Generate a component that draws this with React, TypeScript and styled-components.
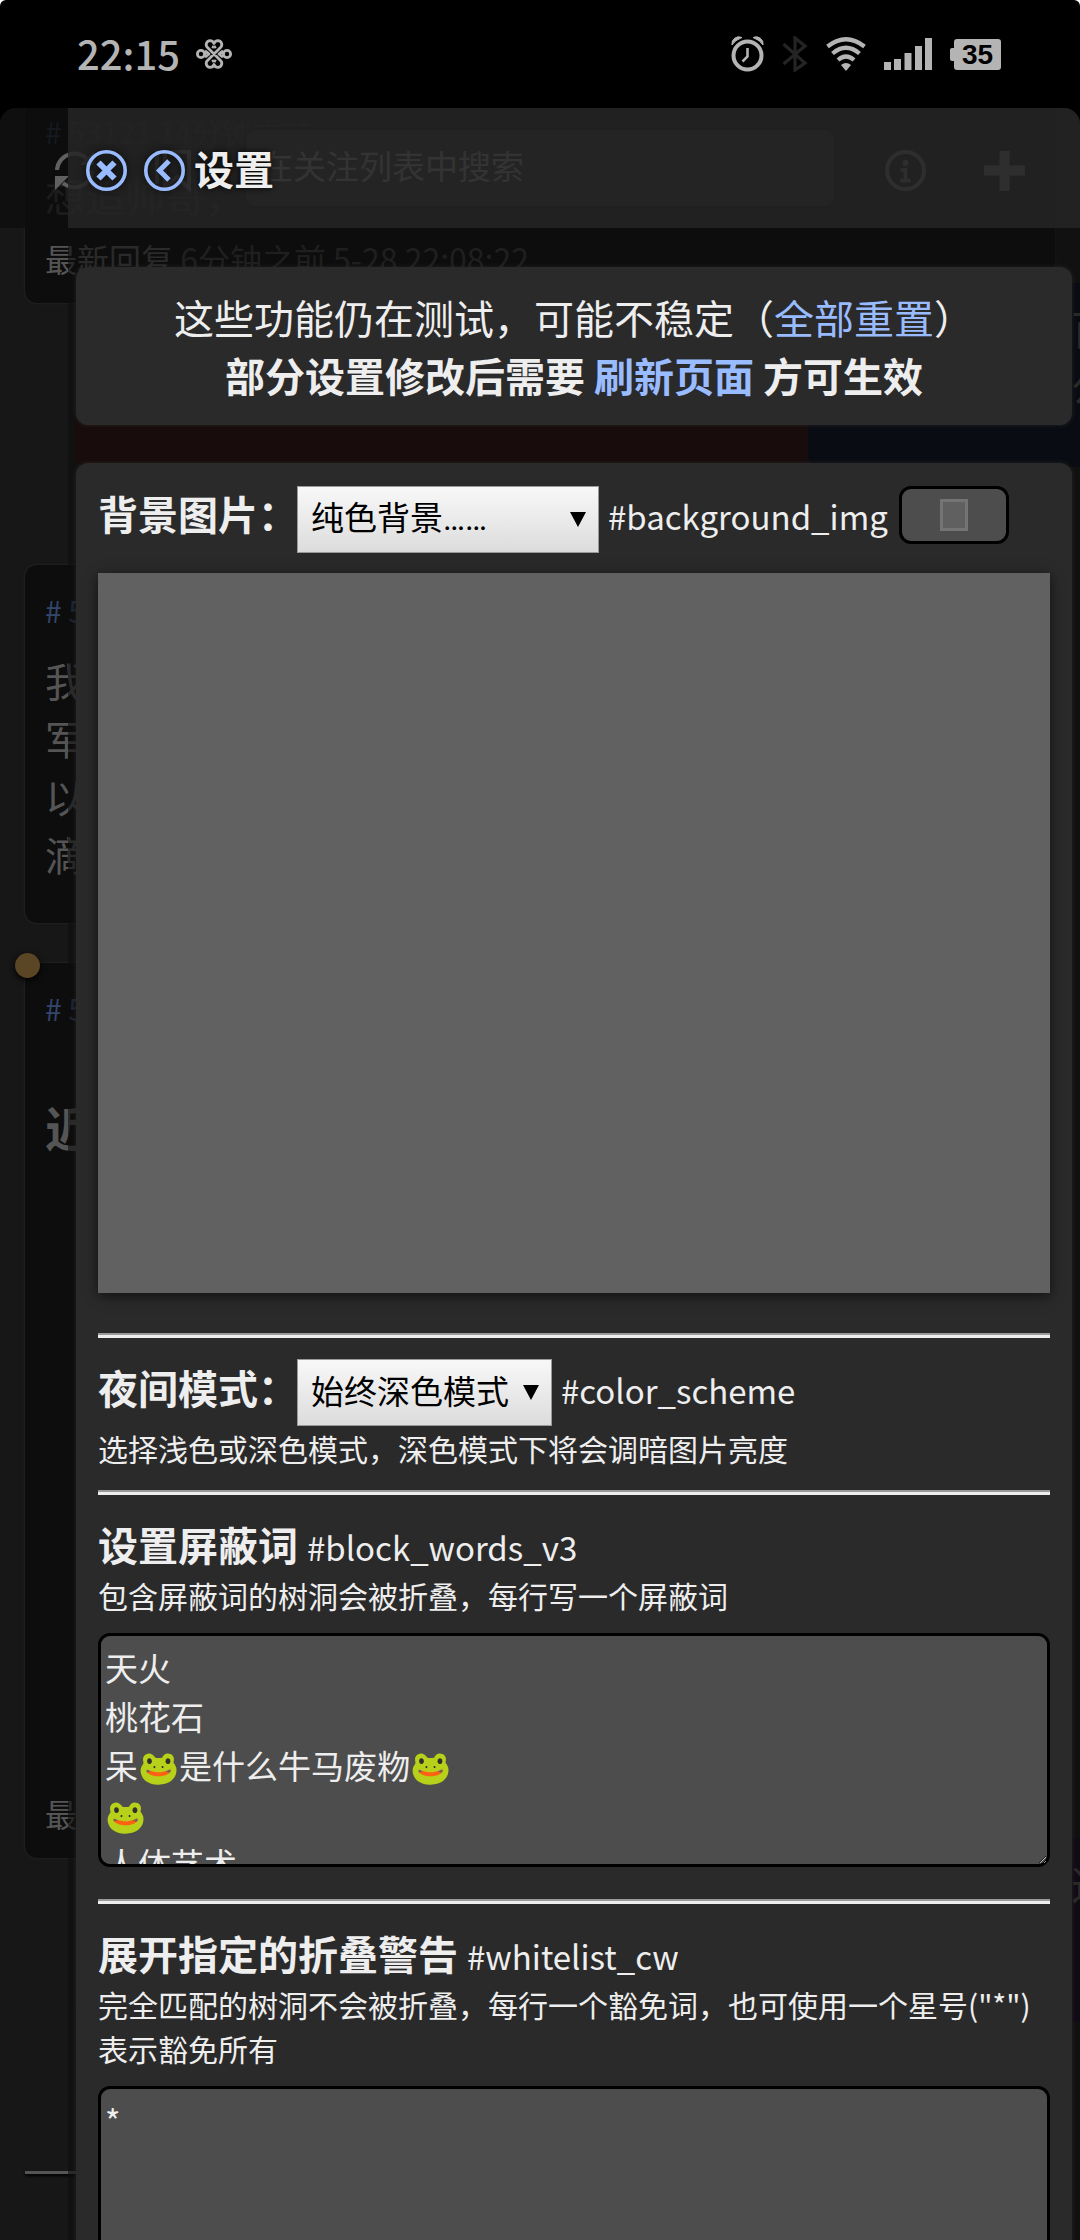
import React from "react";
import styled, { createGlobalStyle, css } from "styled-components";

const sans = `"Noto Sans CJK SC", "Noto Sans", sans-serif`;

const GlobalStyle = createGlobalStyle`
  *, *::before, *::after { box-sizing: border-box; }
  body { margin: 0; background: #fff; }
`;

/* ---------- device frame ---------- */

const Screen = styled.div`
  position: relative;
  display: flex;
  flex-direction: column;
  height: 100vh;
  overflow: hidden;
  border-radius: 6px 6px 0 0;
  background: #000;
  color: #eee;
  font-family: ${sans};
  font-size: 40px;
  line-height: 58px;
`;

const StatusBar = styled.header`
  flex: none;
  display: flex;
  align-items: center;
  justify-content: space-between;
  height: 108px;
  padding: 0 79px 0 77px;
  color: #b4b4b4;
  svg { display: block; }
`;

const StatusGroup = styled.div<{ $gap: number }>`
  display: flex;
  align-items: center;
  gap: ${(p) => p.$gap}px;
`;

const Clock = styled.time`
  padding-bottom: 2px;
  font-size: 40px;
  line-height: 56px;
  font-weight: 500;
`;

const Battery = styled.span`
  display: flex;
  align-items: center;
  &::before {
    content: "";
    width: 4px;
    height: 13px;
    border-radius: 2px 0 0 2px;
    background: #b4b4b4;
  }
`;

const BatteryLevel = styled.span`
  width: 47px;
  height: 31px;
  border-radius: 3px;
  background: #b4b4b4;
  color: #000;
  font: bold 28px/31px "Liberation Sans", sans-serif;
  text-align: center;
`;

const Viewport = styled.div`
  position: relative;
  flex: 1;
  min-height: 0;
  overflow: hidden;
  border-radius: 16px 16px 0 0;
  background: #171717;
`;

/* ---------- dimmed timeline under the panel ---------- */

const Timeline = styled.div`
  position: absolute;
  inset: 0;
  overflow: hidden;
  color: #555;
  white-space: nowrap;
`;

const TimelineBar = styled.div`
  position: absolute;
  inset: 0 0 auto 0;
  display: flex;
  align-items: center;
  height: 120px;
  padding: 4px 55px 0 54px;
  background: rgba(14, 14, 14, 0.8);
  color: #606060;
  svg { flex: none; display: block; }
`;

const SearchField = styled.input`
  flex: 1;
  min-width: 0;
  height: 82px;
  margin: 0 48px 4px 52px;
  padding: 0 14px 6px;
  border: 3px solid #000;
  border-radius: 12px;
  background: #1c1c1c;
  color: #808080;
  font: 33px/48px ${sans};
  &::placeholder { color: #808080; opacity: 1; }
`;

const BarIcon = styled.span<{ $before: number }>`
  margin-left: ${(p) => p.$before}px;
`;

const Post = styled.article<{ $height: number; $top?: number }>`
  position: relative;
  display: flex;
  flex-direction: column;
  height: ${(p) => p.$height}px;
  margin: ${(p) => p.$top ?? 0}px 25px 0;
  padding: 22px 20px;
  border-radius: 12px;
  background: #0d0d0d;
  box-shadow: 0 0 3px rgba(70, 70, 70, 0.5);
`;

const PostId = styled.a`
  color: #34466c;
  font-size: 30px;
  line-height: 46px;
  text-decoration: none;
`;

const PostMeta = styled.div`
  display: flex;
  justify-content: space-between;
  padding: 0 230px 0 0;
  font-size: 30px;
  line-height: 46px;
  color: #34466c;
`;

const Muted = styled.span`
  color: #3a3a3a;
`;

const PostText = styled.p<{ $top: number }>`
  margin: ${(p) => p.$top}px 0 0;
  white-space: pre-line;
`;

const PostHeading = styled.h2`
  margin: 60px 0 0;
  font-size: 48px;
  line-height: 70px;
`;

const PostFooter = styled.footer`
  margin-top: auto;
  font-size: 32px;
  line-height: 46px;
`;

const Marker = styled.span`
  position: absolute;
  top: -10px;
  left: -10px;
  width: 25px;
  height: 25px;
  border-radius: 50%;
  background: #5a4524;
  box-shadow: 0 2px 6px #000;
`;

const QuoteRow = styled.div<{ $height: number }>`
  display: flex;
  height: ${(p) => p.$height}px;
  margin: -20px 0 0 75px;
`;

const Quote = styled.article<{ $bg: string; $basis?: number; $indent?: number }>`
  flex: ${(p) => (p.$basis ? `0 0 ${p.$basis}px` : "1 1 0")};
  min-width: 0;
  overflow: hidden;
  padding-left: ${(p) => p.$indent ?? 0}px;
  border-radius: 12px 0 0 12px;
  background: ${(p) => p.$bg};
  color: #55554c;
`;

const TimelineRule = styled.hr`
  height: 3px;
  margin: 149px 25px 0;
  border: 0;
  background: #555;
  box-shadow: 0 2px 3px #000;
`;

/* ---------- settings panel ---------- */

const Panel = styled.aside`
  position: absolute;
  inset: 0 0 0 68px;
  display: flex;
  flex-direction: column;
`;

const PanelHeader = styled.div`
  flex: none;
  display: flex;
  align-items: center;
  height: 120px;
  padding: 4px 18px 0;
  background: rgba(38, 38, 38, 0.85);
`;

const IconButton = styled.button<{ $after: number }>`
  display: block;
  margin: 0 ${(p) => p.$after}px 0 0;
  padding: 0;
  border: 0;
  background: none;
  color: #99bbff;
  svg { display: block; filter: drop-shadow(0 0 4px rgba(0, 0, 0, 0.8)); }
`;

const PanelTitle = styled.h1`
  margin: 0;
  padding-bottom: 4px;
  font-size: 40px;
  line-height: 58px;
  text-shadow: 0 0 6px #000;
`;

const PanelBody = styled.div`
  flex: 1;
  min-height: 0;
  display: flex;
  flex-direction: column;
  gap: 38px;
  padding: 39px 8px;
  overflow-y: auto;
  scrollbar-width: none;
  background: rgba(13, 13, 13, 0.6);
`;

const Box = styled.section<{ $center?: boolean }>`
  flex: none;
  padding: 21px 22px;
  border-radius: 12px;
  background: #2a2a2a;
  box-shadow: 0 0 5px rgba(50, 50, 50, 0.6);
  ${(p) =>
    p.$center &&
    css`
      text-align: center;
    `}
`;

const Line = styled.p`
  margin: 0;
`;

const Link = styled.a`
  color: #99bbff;
  text-decoration: none;
`;

const Row = styled.div`
  display: flex;
  flex-wrap: wrap;
  align-items: baseline;
`;

const Label = styled.label`
  font-weight: bold;
`;

const Key = styled.span`
  margin-left: 9px;
  font-size: 33px;
  line-height: 48px;
`;

const SelectWrap = styled.span<{ $width: number }>`
  position: relative;
  width: ${(p) => p.$width}px;
  margin-left: -1px;
  color: #000;
  font-size: 33px;
  line-height: 48px;
  &::after {
    content: "";
    position: absolute;
    top: 26px;
    right: 13px;
    border: solid transparent;
    border-width: 15px 8px 0;
    border-top-color: #000;
    pointer-events: none;
  }
`;

const Select = styled.select`
  display: block;
  appearance: none;
  width: 100%;
  height: 67px;
  padding: 0 13px;
  border: 1px solid #999;
  border-radius: 0;
  background: linear-gradient(#f8f8f8, #dcdcdc);
  color: #000;
  font: 33px/48px Roboto, ${sans};
`;

const GlyphButton = styled.button`
  align-self: flex-start;
  display: flex;
  align-items: center;
  justify-content: center;
  width: 110px;
  height: 58px;
  margin: 2px 0 0 11px;
  padding: 0;
  border: 3px solid #000;
  border-radius: 12px;
  background: #4d4d4d;
  &::before {
    content: "";
    width: 28px;
    height: 32px;
    border: 3px solid #747474;
    background: #606060;
  }
`;

const Preview = styled.div`
  height: 720px;
  margin: 20px 0 40px;
  background: #616161;
  box-shadow: 0 3px 12px rgba(0, 0, 0, 0.6);
`;

const Rule = styled.hr`
  height: 5px;
  margin: 20px 0;
  border: solid;
  border-width: 2px 0 3px;
  border-color: #999 #eee #eee #999;
`;

const Hint = styled.p`
  margin: 0;
  font-size: 30px;
  line-height: 44px;
`;

const TextArea = styled.textarea`
  display: block;
  width: 100%;
  height: 234px;
  margin: 16px 0 32px;
  padding: 7px 4px;
  border: 3px solid #000;
  border-radius: 12px;
  background: #4d4d4d;
  color: #eee;
  font: 33px/49px ${sans};
  resize: vertical;
  scrollbar-width: none;
`;

/* ---------- icons ---------- */

const KnotIcon = () => (
  <svg width="36" height="30" viewBox="0 0 36 30" fill="none" stroke="currentColor" strokeWidth="2.8" strokeLinejoin="round">
    <circle cx="5" cy="15" r="3.6" />
    <circle cx="31" cy="15" r="3.6" />
    <path d="M8.5 14 10 12.500 13 15l-3 2.500L8.500 16M27.500 14 26 12.500 23 15l3 2.500 1.500-1.500" />
    <path d="M18 8.500 16 7.500M18 8.500l2-1M18 21.500l-2 1M18 21.500l2 1" />
    <path d="M18 15 11.500 8.500A4 4 0 0 1 14 1.600q3 0 4 2.900 1-2.900 4-2.900a4 4 0 0 1 2.500 6.900L11.500 21.500A4 4 0 0 0 14 28.400q3 0 4-2.900 1 2.900 4 2.900a4 4 0 0 0 2.500-6.900Z" />
  </svg>
);

const AlarmIcon = () => (
  <svg width="33" height="36" viewBox="0 0 33 36" fill="none" stroke="currentColor">
    <circle cx="16.500" cy="19.500" r="14" strokeWidth="4" />
    <path d="M16.500 12v8.500l-5 5" strokeWidth="2.600" />
    <path d="M1 9a7 7 0 0 1 10-7.500Q4 4 1 9ZM32 9A7 7 0 0 0 22 1.500Q29 4 32 9Z" fill="currentColor" strokeWidth="1" />
  </svg>
);

const BluetoothIcon = () => (
  <svg width="26" height="36" viewBox="0 0 26 36" fill="none" stroke="#242424" strokeWidth="3.200">
    <path d="M1.500 8 23 27 13 34V2l10 8L1.500 28" />
  </svg>
);

const WifiIcon = () => (
  <svg width="40" height="34" viewBox="0 0 40 34" fill="none" stroke="currentColor" strokeWidth="4.200">
    <path d="M1.500 9.500Q20-5 38.500 9.500M6.500 16.500Q20 5 33.500 16.500M12 23q8-7 16 0" />
    <path d="m20 34-5-6q5-4 10 0Z" fill="currentColor" stroke="none" />
  </svg>
);

const SignalIcon = () => (
  <svg width="48" height="32" viewBox="0 0 48 32" fill="currentColor">
    <path d="M0 24h7v8H0zM10 21h7v11h-7zM20.500 15h7v17h-7zM31 8h7v24h-7zM41 0h7v32h-7z" />
  </svg>
);

const CloseIcon = () => (
  <svg width="41" height="41" viewBox="0 0 41 41" fill="none" stroke="currentColor">
    <circle cx="20.500" cy="20.500" r="18.700" strokeWidth="3.600" />
    <path d="m12.500 12.500 16 16m0-16-16 16" strokeWidth="6" />
  </svg>
);

const BackIcon = () => (
  <svg width="41" height="41" viewBox="0 0 41 41" fill="none" stroke="currentColor">
    <circle cx="20.500" cy="20.500" r="18.700" strokeWidth="3.600" />
    <path d="M25 11 15.500 20.500 25 30" strokeWidth="5" />
  </svg>
);

const RefreshIcon = () => (
  <svg width="41" height="41" viewBox="0 0 41 41" fill="none" stroke="currentColor" strokeWidth="4">
    <path d="M3 20a17.500 17.500 0 0 1 33-7M38 21a17.500 17.500 0 0 1-29 12" />
    <path d="M1 26h14L1 40ZM40 15H26L40 1Z" fill="currentColor" stroke="none" />
  </svg>
);

const BookmarkIcon = () => (
  <svg width="36" height="41" viewBox="0 0 36 41" fill="none" stroke="currentColor" strokeWidth="4">
    <path d="M10 2h24v36L22 27 10 38Z" />
    <path d="M2 34V2h6" />
  </svg>
);

const InfoIcon = () => (
  <svg width="41" height="41" viewBox="0 0 41 41" fill="none" stroke="currentColor">
    <circle cx="20.500" cy="20.500" r="18.500" strokeWidth="4" />
    <circle cx="20.500" cy="13" r="3" fill="currentColor" stroke="none" />
    <path d="M15.500 20h5v10.500M15.500 30.500h10" strokeWidth="3.600" />
  </svg>
);

const PlusIcon = () => (
  <svg width="41" height="41" viewBox="0 0 41 41" fill="currentColor">
    <path d="M15.500 1h10v14.500H40a1 1 0 0 1 1 1v8a1 1 0 0 1-1 1H25.500V40a1 1 0 0 1-1 1h-8a1 1 0 0 1-1-1V25.500H1a1 1 0 0 1-1-1v-8a1 1 0 0 1 1-1h14.500Z" />
  </svg>
);

/* ---------- page ---------- */

const blockWords = "天火\n桃花石\n呆🐸是什么牛马废粅🐸\n🐸\n人体艺术";

export default function App() {
  return (
    <Screen>
      <GlobalStyle />
      <StatusBar>
        <StatusGroup $gap={16}>
          <Clock>22:15</Clock>
          <KnotIcon />
        </StatusGroup>
        <StatusGroup $gap={18}>
          <AlarmIcon />
          <BluetoothIcon />
          <WifiIcon />
          <SignalIcon />
          <Battery>
            <BatteryLevel>35</BatteryLevel>
          </Battery>
        </StatusGroup>
      </StatusBar>

      <Viewport>
        <Timeline>
          <Post $height={217} $top={-22}>
            <PostMeta>
              <span># 53121 14分钟之前</span>
            </PostMeta>
            <PostText $top={12}>想追帅哥，</PostText>
            <PostFooter>
              最新回复 <Muted>6分钟之前 5-28 22:08:22</Muted>
            </PostFooter>
          </Post>
          <QuoteRow $height={184}>
            <Quote $bg="#2a0b0b" $basis={733} />
            <Quote $bg="#030b1b" $indent={263}>
              <PostText $top={16}>{"百\n公"}</PostText>
            </Quote>
          </QuoteRow>
          <Post $height={358} $top={98}>
            <PostId href="#post"># 53120</PostId>
            <PostText $top={18}>{"我\n军\n以\n滴"}</PostText>
          </Post>
          <Post $height={895} $top={40}>
            <Marker />
            <PostId href="#post"># 53119</PostId>
            <PostHeading>近</PostHeading>
            <PostFooter>最新回复</PostFooter>
          </Post>
          <QuoteRow $height={184}>
            <Quote $bg="#1c1c08" $basis={990} />
            <Quote $bg="#1a0722" $indent={6}>
              <PostText $top={16}>这</PostText>
            </Quote>
          </QuoteRow>
          <TimelineRule />
          <TimelineBar>
            <RefreshIcon />
            <BarIcon $before={60}>
              <BookmarkIcon />
            </BarIcon>
            <SearchField aria-label="搜索" placeholder="在关注列表中搜索" />
            <InfoIcon />
            <BarIcon $before={58}>
              <PlusIcon />
            </BarIcon>
          </TimelineBar>
        </Timeline>

        <Panel>
          <PanelHeader>
            <IconButton type="button" aria-label="关闭" $after={17}>
              <CloseIcon />
            </IconButton>
            <IconButton type="button" aria-label="返回" $after={9}>
              <BackIcon />
            </IconButton>
            <PanelTitle>设置</PanelTitle>
          </PanelHeader>

          <PanelBody>
            <Box $center>
              <Line>
                这些功能仍在测试，可能不稳定（<Link href="#reset">全部重置</Link>）
              </Line>
              <Line as="strong">
                部分设置修改后需要 <Link href="#reload">刷新页面</Link> 方可生效
              </Line>
            </Box>

            <Box>
              <Row>
                <Label htmlFor="background_img">背景图片：</Label>
                <SelectWrap $width={302}>
                  <Select id="background_img">
                    <option>纯色背景……</option>
                  </Select>
                </SelectWrap>
                <Key>#background_img</Key>
                <GlyphButton type="button" aria-label="背景颜色" />
              </Row>
              <Preview />
              <Rule />
              <Row>
                <Label htmlFor="color_scheme">夜间模式：</Label>
                <SelectWrap $width={255}>
                  <Select id="color_scheme">
                    <option>始终深色模式</option>
                  </Select>
                </SelectWrap>
                <Key>#color_scheme</Key>
              </Row>
              <Hint>选择浅色或深色模式，深色模式下将会调暗图片亮度</Hint>
              <Rule />
              <Row>
                <Label htmlFor="block_words">设置屏蔽词</Label>
                <Key>#block_words_v3</Key>
              </Row>
              <Hint>包含屏蔽词的树洞会被折叠，每行写一个屏蔽词</Hint>
              <TextArea id="block_words" defaultValue={blockWords} />
              <Rule />
              <Row>
                <Label htmlFor="whitelist_cw">展开指定的折叠警告</Label>
                <Key>#whitelist_cw</Key>
              </Row>
              <Hint>完全匹配的树洞不会被折叠，每行一个豁免词，也可使用一个星号("*")表示豁免所有</Hint>
              <TextArea id="whitelist_cw" defaultValue="*" />
            </Box>
          </PanelBody>
        </Panel>
      </Viewport>
    </Screen>
  );
}
